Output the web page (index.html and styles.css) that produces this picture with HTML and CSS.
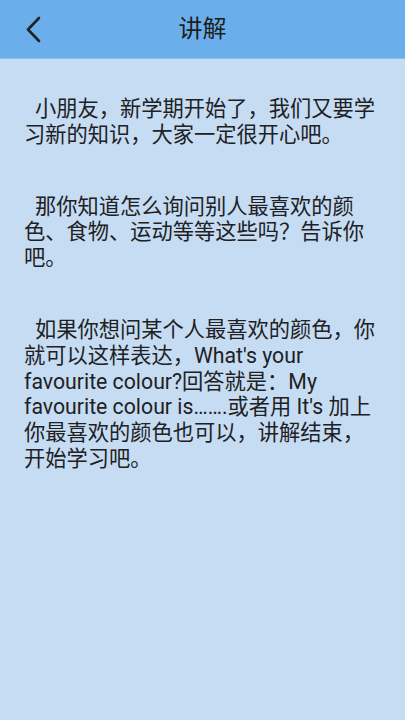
FILE: index.html
```html
<!DOCTYPE html>
<html lang="zh-CN">
<head>
<meta charset="utf-8">
<title>讲解</title>
<link rel="stylesheet" href="styles.css">
</head>
<body>
<div class="screen">
  <header class="topbar">
    <span class="back">
      <svg width="20" height="30" viewBox="0 0 20 30"><path d="M15 3 L4 14.5 L15 26" fill="none" stroke="#1f2326" stroke-width="2.6" stroke-linecap="round" stroke-linejoin="round"/></svg>
    </span>
    <h1 class="title">讲解</h1>
  </header>
  <main class="content">
    <p class="para">小朋友，新学期开始了，我们又要学习新的知识，大家一定很开心吧。</p>
    <p class="para">那你知道怎么询问别人最喜欢的颜色、食物、运动等等这些吗？告诉你吧。</p>
    <p class="para">如果你想问某个人最喜欢的颜色，你就可以这样表达，What's your favourite colour?回答就是：My favourite colour is…….或者用 It's 加上你最喜欢的颜色也可以，讲解结束，开始学习吧。</p>
  </main>
</div>
</body>
</html>
```
FILE: styles.css
```css
html, body {
  margin: 0;
  padding: 0;
}
body {
  width: 405px;
  height: 720px;
  background: #c6dcf2;
  font-family: Roboto, "Noto Sans CJK SC", sans-serif;
  overflow: hidden;
}
.screen {
  display: flex;
  flex-direction: column;
  height: 720px;
}
.topbar {
  height: 59px;
  background: #6aafeb;
  border-bottom: 1px solid #8cc2f0;
  display: flex;
  align-items: center;
  justify-content: center;
  position: relative;
  box-sizing: border-box;
}
.back {
  position: absolute;
  left: 24px;
  top: 15px;
  width: 20px;
  height: 30px;
}
.back svg { display: block; }
.title {
  margin: 0;
  font-size: 24px;
  font-weight: 400;
  color: #1c1f22;
  line-height: 30px;
}
.content {
  padding: 37px 25px 0 24px;
}
.para {
  margin: 0 0 46px 0;
  font-size: 21.25px;
  line-height: 25.8px;
  color: #202124;
  text-indent: 11px;
}
```
